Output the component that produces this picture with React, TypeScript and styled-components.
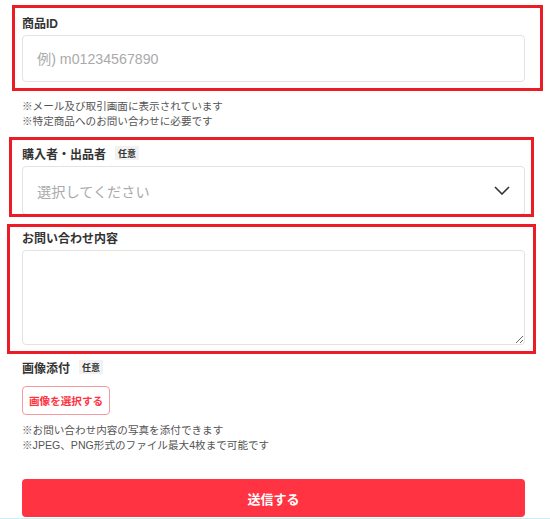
import { createGlobalStyle, styled } from 'styled-components';

const GlobalStyle = createGlobalStyle`
  body {
    margin: 0;
    background: #fff;
    font-family: "Liberation Sans", "Noto Sans CJK JP", sans-serif;
    color: #333;
  }
`;

const Page = styled.form`
  width: 503px;
  padding: 12px 25px 0 22px;
  display: flex;
  flex-direction: column;
`;

const Field = styled.div<{ $mt?: number }>`
  position: relative;
  display: flex;
  flex-direction: column;
  margin-top: ${(p) => p.$mt ?? 0}px;
`;

// red annotation frame drawn over a field group
const Highlight = styled.div<{ $t: number; $r: number; $b: number; $l: number }>`
  position: absolute;
  top: ${(p) => p.$t}px;
  right: ${(p) => p.$r}px;
  bottom: ${(p) => p.$b}px;
  left: ${(p) => p.$l}px;
  border: 3px solid #ec1c27;
  pointer-events: none;
`;

const LabelRow = styled.div`
  display: flex;
  align-items: center;
  gap: 9px;
  height: 20px;
  margin-bottom: 3px;
`;

const Label = styled.label`
  font-size: 12px;
  font-weight: 700;
  color: #333;
`;

const Badge = styled.span`
  display: inline-flex;
  align-items: center;
  height: 14px;
  padding: 0 3px;
  background: #f2f2f2;
  color: #333;
  font-size: 9px;
  font-weight: 700;
`;

const TextInput = styled.input`
  box-sizing: border-box;
  width: 100%;
  height: 47px;
  padding: 0 14px;
  border: 1px solid #e3e3e3;
  border-radius: 4px;
  font-family: inherit;
  font-size: 14.2px;
  color: #333;
  outline: none;
  &::placeholder {
    color: #aaa;
  }
`;

const SelectBox = styled.div`
  box-sizing: border-box;
  height: 49px;
  padding: 0 14px;
  border: 1px solid #e3e3e3;
  border-radius: 4px;
  display: flex;
  align-items: center;
  justify-content: space-between;
  font-size: 14.2px;
  color: #aaa;
`;

const TextArea = styled.textarea`
  box-sizing: border-box;
  width: 100%;
  height: 95px;
  border: 1px solid #e3e3e3;
  border-radius: 4px;
  font-family: inherit;
  font-size: 14px;
  outline: none;
  display: block;
`;

const Notes = styled.p<{ $mt: number }>`
  margin: ${(p) => p.$mt}px 0 0;
  font-size: 10.6px;
  line-height: 15px;
  color: #555;
`;

const PickButton = styled.button`
  align-self: flex-start;
  height: 29px;
  margin-top: 6px;
  padding: 0 6px;
  background: #fff;
  border: 1px solid #f59a9f;
  border-radius: 4px;
  color: #ff3341;
  font-family: inherit;
  font-size: 10.6px;
  font-weight: 700;
`;

const SubmitButton = styled.button`
  height: 38px;
  margin-top: 26px;
  border: none;
  border-radius: 4px;
  background: #ff3341;
  color: #fff;
  font-family: inherit;
  font-size: 13px;
  font-weight: 700;
`;

const BottomLine = styled.div`
  height: 1px;
  margin-top: 1px;
  background: #c9eff0;
`;

const Chevron = () => (
  <svg width="16" height="9" viewBox="0 0 16 9" fill="none">
    <polyline points="1,1 8,8 15,1" stroke="#333" strokeWidth="1.6" />
  </svg>
);

export default function App() {
  return (
    <>
      <GlobalStyle />
      <Page onSubmit={(e) => e.preventDefault()}>
        <Field>
          <LabelRow>
            <Label>商品ID</Label>
          </LabelRow>
          <TextInput placeholder="例) m01234567890" />
          <Highlight $t={-7} $r={-18} $b={-9} $l={-10} />
        </Field>
        <Notes $mt={17}>
          ※メール及び取引画面に表示されています
          <br />
          ※特定商品へのお問い合わせに必要です
        </Notes>

        <Field $mt={14}>
          <LabelRow>
            <Label>購入者・出品者</Label>
            <Badge>任意</Badge>
          </LabelRow>
          <SelectBox>
            選択してください
            <Chevron />
          </SelectBox>
          <Highlight $t={-6} $r={-9} $b={-2} $l={-13} />
        </Field>

        <Field $mt={12}>
          <LabelRow>
            <Label>お問い合わせ内容</Label>
          </LabelRow>
          <TextArea />
          <Highlight $t={-3} $r={-11} $b={-9} $l={-15} />
        </Field>

        <Field $mt={12}>
          <LabelRow>
            <Label>画像添付</Label>
            <Badge>任意</Badge>
          </LabelRow>
        </Field>
        <PickButton type="button">画像を選択する</PickButton>
        <Notes $mt={8}>
          ※お問い合わせ内容の写真を添付できます
          <br />
          ※JPEG、PNG形式のファイル最大4枚まで可能です
        </Notes>

        <SubmitButton type="submit">送信する</SubmitButton>
      </Page>
      <BottomLine />
    </>
  );
}
